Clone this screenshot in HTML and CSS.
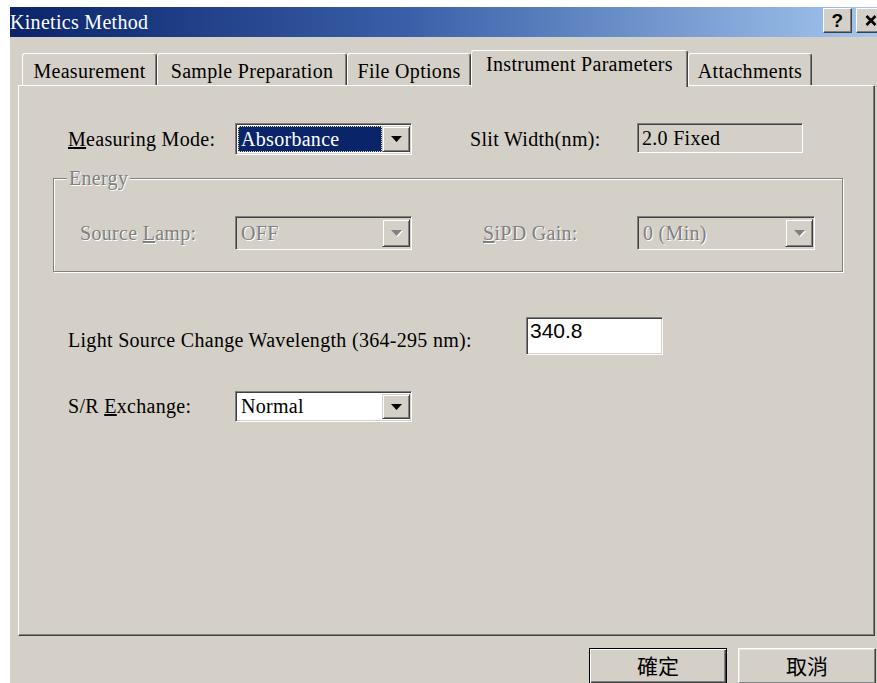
FILE: index.html
```html
<!DOCTYPE html>
<html lang="en">
<head>
<meta charset="utf-8">
<title>Kinetics Method</title>
<link rel="stylesheet" href="styles.css">
</head>
<body>
<div class="window">
  <div class="titlebar">
    <span class="title">Kinetics Method</span>
    <div class="caption-buttons">
      <span class="cap-btn help">?</span>
      <span class="cap-btn close">
        <svg width="12" height="11" viewBox="0 0 12 11"><path d="M1.5 1 L10.5 10 M10.5 1 L1.5 10" stroke="#000" stroke-width="2.6" fill="none"/></svg>
      </span>
    </div>
  </div>

  <div class="tabs">
    <div class="tab tab-measure">Measurement</div>
    <div class="tab tab-sample">Sample Preparation</div>
    <div class="tab tab-file">File Options</div>
    <div class="tab tab-instrument active">Instrument Parameters</div>
    <div class="tab tab-attach">Attachments</div>
  </div>

  <div class="panel">
    <div class="row row-mode">
      <span class="lbl lbl-col"><u>M</u>easuring Mode:</span>
      <div class="combo combo-mode">
        <span class="combo-value selected">Absorbance</span>
        <span class="combo-btn"><svg class="arrow" width="11" height="6" viewBox="0 0 11 6"><path d="M0 0h11L5.5 6z"/></svg></span>
      </div>
      <span class="lbl slit-lbl">Slit Width(nm):</span>
      <div class="field slit">2.0 Fixed</div>
    </div>

    <div class="group">
      <span class="group-title disabled">Energy</span>
      <div class="row group-row">
        <span class="lbl lamp-lbl disabled">Source <u>L</u>amp:</span>
        <div class="combo combo-lamp off">
          <span class="combo-value">OFF</span>
          <span class="combo-btn"><svg class="arrow" width="11" height="6" viewBox="0 0 11 6"><path d="M0 0h11L5.5 6z"/></svg></span>
        </div>
        <span class="lbl gain-lbl disabled"><u>S</u>iPD Gain:</span>
        <div class="combo combo-gain off">
          <span class="combo-value">0 (Min)</span>
          <span class="combo-btn"><svg class="arrow" width="11" height="6" viewBox="0 0 11 6"><path d="M0 0h11L5.5 6z"/></svg></span>
        </div>
      </div>
    </div>

    <div class="row row-wave">
      <span class="lbl wave-lbl">Light Source Change Wavelength (364-295 nm):</span>
      <div class="field edit">340.8</div>
    </div>

    <div class="row row-sr">
      <span class="lbl lbl-col">S/R <u>E</u>xchange:</span>
      <div class="combo combo-sr">
        <span class="combo-value">Normal</span>
        <span class="combo-btn"><svg class="arrow" width="11" height="6" viewBox="0 0 11 6"><path d="M0 0h11L5.5 6z"/></svg></span>
      </div>
    </div>
  </div>

  <div class="buttons">
    <button class="btn default">確定</button>
    <button class="btn">取消</button>
  </div>
</div>
</body>
</html>
```

FILE: styles.css
```css
* {
  box-sizing: border-box;
}

html,
body {
  margin: 0;
}

body {
  background: #fff;
  width: 877px;
  height: 683px;
  overflow: hidden;
}

/* dialog frame */
.window {
  margin: 7px 0 0 10px;
  width: 880px;
  height: 690px;
  background: #d4d0c8;
  color: #000;
  font: 20px "Liberation Serif", "Noto Sans CJK TC", serif;
  letter-spacing: 0.3px;
}

.titlebar {
  display: flex;
  height: 30px;
  background: linear-gradient(90deg, #0a246a 0%, #3a5fa8 45%, #a6caf0 100%);
  color: #fff;
}

.title {
  flex: 1;
  line-height: 30px;
  white-space: nowrap;
}

.caption-buttons {
  display: flex;
  gap: 4px;
  margin: 1px 5px 0 0;
}

.cap-btn {
  width: 29px;
  height: 25px;
  display: flex;
  align-items: center;
  justify-content: center;
  background: #d4d0c8;
  border: 1px solid;
  border-color: #fff #404040 #404040 #fff;
  box-shadow: inset -1px -1px #808080;
  color: #000;
  font: bold 19px "Liberation Sans", sans-serif;
}

/* tab strip */
.tabs {
  position: relative;
  z-index: 1;
  display: flex;
  align-items: flex-end;
  height: 35px;
  margin: 13px 0 0 12px;
}

.tab {
  height: 32px;
  display: flex;
  align-items: center;
  justify-content: center;
  padding-top: 4px;
  white-space: nowrap;
  background: #d4d0c8;
  border-top: 1px solid #fff;
  border-left: 1px solid #fff;
  border-right: 1px solid #404040;
  box-shadow: inset -1px 0 #808080;
  border-radius: 3px 3px 0 0;
}

.tab.active {
  height: 37px;
  margin-bottom: -2px;
  padding-top: 0;
  padding-bottom: 10px;
}

.tab-measure { width: 135px; }
.tab-sample { width: 190px; }
.tab-file { width: 124px; }
.tab-instrument { width: 217px; }
.tab-attach { width: 124px; }

/* tab page */
.panel {
  margin-left: 8px;
  width: 857px;
  height: 551px;
  padding: 37px 0 0 34px;
  border: 1px solid;
  border-color: #fff #404040 #404040 #fff;
  box-shadow: inset -1px -1px #808080;
}

.row {
  display: flex;
  align-items: center;
}

.panel > .row {
  margin-left: 15px;
}

.lbl {
  white-space: nowrap;
  flex: none;
}

.lbl-col { width: 167px; }

.slit-lbl {
  width: 167px;
  margin-left: 58px;
}

.disabled {
  color: #808080;
  text-shadow: 1px 1px 0 #fff;
}

/* sunken combo boxes */
.combo {
  flex: none;
  display: flex;
  padding: 2px 1px 2px 2px;
  background: #fff;
  border: 1px solid;
  border-color: #808080 #fff #fff #808080;
  box-shadow: inset 1px 1px #404040, inset -1px -1px #d4d0c8;
}

.combo-value {
  flex: 1;
  display: flex;
  align-items: center;
  padding-left: 3px;
  white-space: nowrap;
}

.combo-value.selected {
  background: #0a246a;
  color: #fff;
  outline: 1px dotted #e8e0a0;
  outline-offset: -1px;
}

.combo-btn {
  width: 28px;
  display: flex;
  align-items: center;
  justify-content: center;
  background: #d4d0c8;
  border: 1px solid;
  border-color: #d4d0c8 #404040 #404040 #d4d0c8;
  box-shadow: inset 1px 1px #fff, inset -1px -1px #808080;
}

.arrow {
  fill: #000;
}

.combo.off {
  background: #d4d0c8;
}

.combo.off .combo-value {
  color: #808080;
  text-shadow: 1px 1px 0 #fff;
}

.combo.off .arrow {
  fill: #808080;
  filter: drop-shadow(1px 1px 0 #fff);
}

.combo-mode {
  width: 177px;
  height: 32px;
}

.combo-lamp {
  width: 177px;
  height: 34px;
}

.combo-gain {
  width: 178px;
  height: 34px;
}

.combo-sr {
  width: 177px;
  height: 31px;
}

/* text fields */
.field {
  flex: none;
  display: flex;
  border: 1px solid;
  border-color: #808080 #fff #fff #808080;
  box-shadow: inset 1px 1px #404040, inset -1px -1px #d4d0c8;
  white-space: nowrap;
}

.slit {
  align-self: flex-start;
  width: 166px;
  height: 30px;
  align-items: center;
  padding-left: 4px;
  background: #d4d0c8;
}

.edit {
  width: 137px;
  height: 38px;
  align-items: flex-start;
  padding: 1px 0 0 3px;
  background: #fff;
  font: 21px "Liberation Sans", sans-serif;
  letter-spacing: 0;
}

/* Energy group box */
.group {
  position: relative;
  margin-top: 23px;
  width: 790px;
  height: 94px;
  padding: 37px 0 0 26px;
  border: 1px solid #808080;
  box-shadow: inset 1px 1px #fff, 1px 1px 0 #fff;
}

.group-title {
  position: absolute;
  top: -13px;
  left: 13px;
  padding: 0 2px;
  line-height: 24px;
  background: #d4d0c8;
}

.lamp-lbl { width: 155px; }

.gain-lbl {
  width: 154px;
  margin-left: 71px;
}

.row-wave {
  margin-top: 45px;
}

.wave-lbl {
  width: 458px;
  padding-top: 8px;
}

.row-sr {
  margin-top: 36px;
}

/* dialog buttons */
.buttons {
  display: flex;
  gap: 11px;
  margin: 12px 0 0 579px;
}

.btn {
  width: 138px;
  height: 36px;
  margin: 0;
  padding: 0 0 2px;
  background: #d4d0c8;
  color: #000;
  font: 21px "Noto Sans CJK TC", sans-serif;
  border: 1px solid;
  border-color: #fff #404040 #404040 #fff;
  box-shadow: inset -1px -1px #808080, inset 1px 1px #e6e3dd;
}

.btn.default {
  border: 1px solid #000;
  box-shadow: inset 1px 1px #fff, inset -1px -1px #404040, inset -2px -2px #808080;
}
```
